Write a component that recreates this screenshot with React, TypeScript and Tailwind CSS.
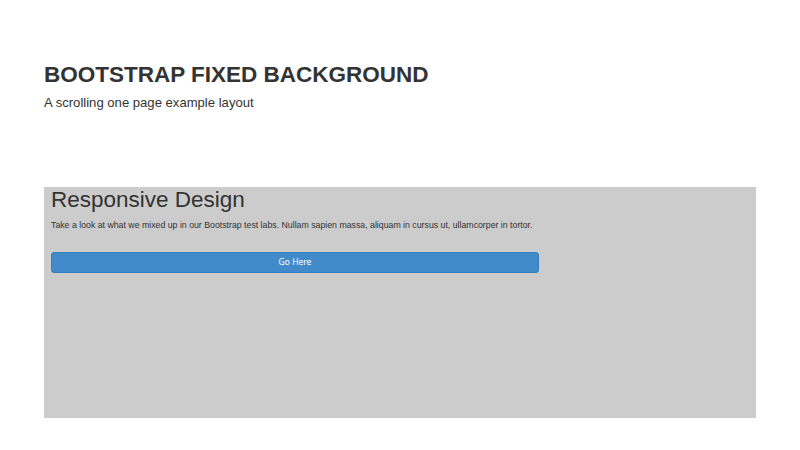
export default function App() {
  return (
    <div className="w-[800px] h-[450px] bg-white text-[#333333] font-['Liberation_Sans',Arial,sans-serif] overflow-hidden">
      <div className="px-[44px] pt-[61px]">
        <h1 className="text-[22.5px] leading-[28px] font-bold">BOOTSTRAP FIXED BACKGROUND</h1>
        <p className="text-[13.1px] leading-[18px] mt-[5px]">A scrolling one page example layout</p>
      </div>

      <div className="mx-[44px] mt-[75px] h-[231px] bg-[#cccccc] px-[7px]">
        <div className="w-[488px]">
          <h2 className="text-[22.5px] leading-[26px] font-light">Responsive Design</h2>
          <p className="text-[8.75px] leading-[12px] mt-[6px] whitespace-nowrap">
            Take a look at what we mixed up in our Bootstrap test labs. Nullam sapien massa, aliquam in cursus ut, ullamcorper in tortor.
          </p>
          <button className="mt-[21px] w-full h-[21px] bg-[#428bca] border border-[#357ebd] rounded-[3px] text-white text-[8.5px] font-['Noto_Sans',sans-serif] flex items-center justify-center">
            Go Here
          </button>
        </div>
      </div>
    </div>
  );
}
